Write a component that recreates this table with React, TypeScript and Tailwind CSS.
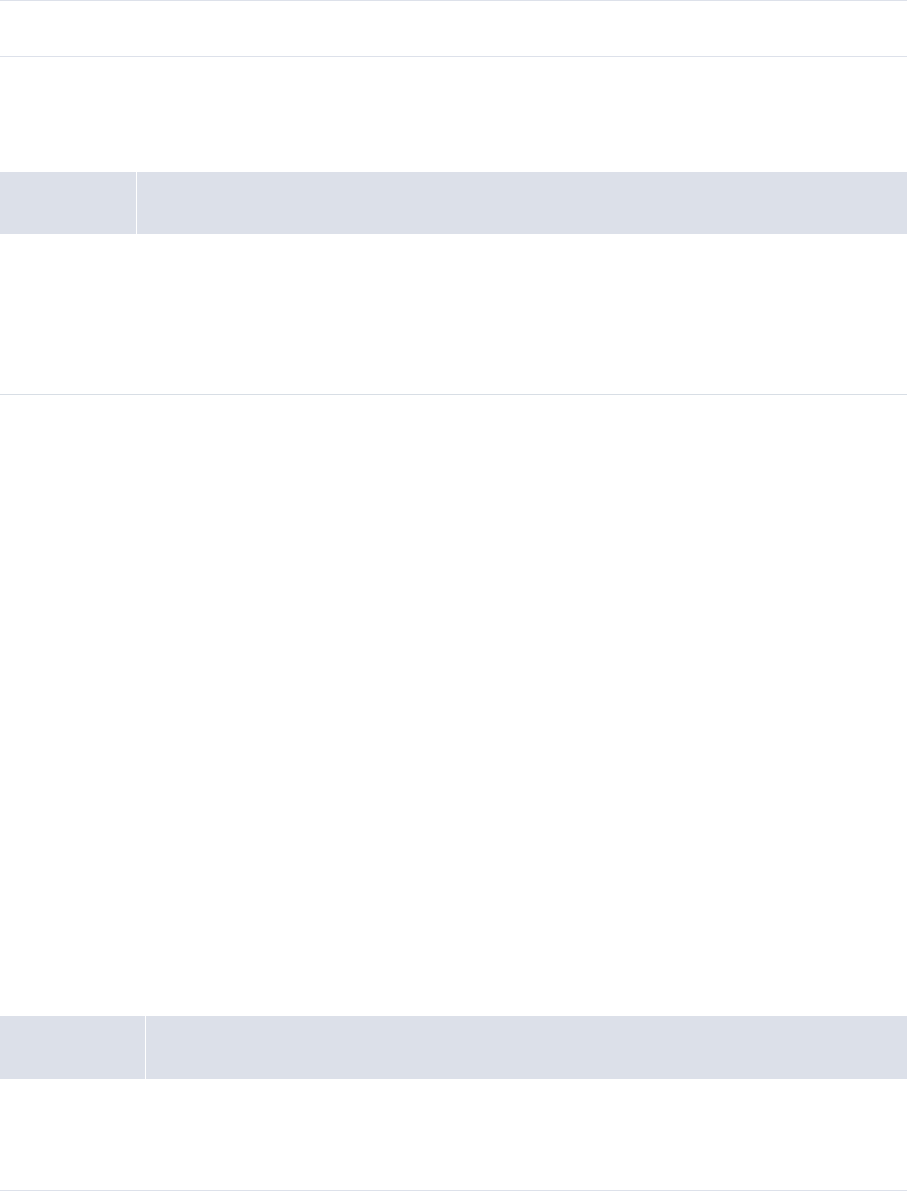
export default function App() {
  return (
    <div className="w-[907px] h-[1191px] bg-white flex flex-col" style={{ fontFamily: '"Liberation Sans", sans-serif' }}>
      <div className="h-[57px] border-y border-[#dde1ea] shrink-0" />
      <div className="h-[115px] shrink-0" />
      <div className="h-[62px] flex shrink-0">
        <div className="w-[136px] bg-[#dce0e9]" />
        <div className="w-[1px] bg-white" />
        <div className="flex-1 bg-[#dce0e9]" />
      </div>
      <div className="h-[161px] border-b border-[#d8dee5] shrink-0" />
      <div className="h-[621px] shrink-0" />
      <div className="h-[63px] flex shrink-0">
        <div className="w-[145px] bg-[#dce0e9]" />
        <div className="w-[1px] bg-white" />
        <div className="flex-1 bg-[#dce0e9]" />
      </div>
      <div className="h-[112px] border-b border-[#dde1ea] shrink-0" />
    </div>
  );
}
